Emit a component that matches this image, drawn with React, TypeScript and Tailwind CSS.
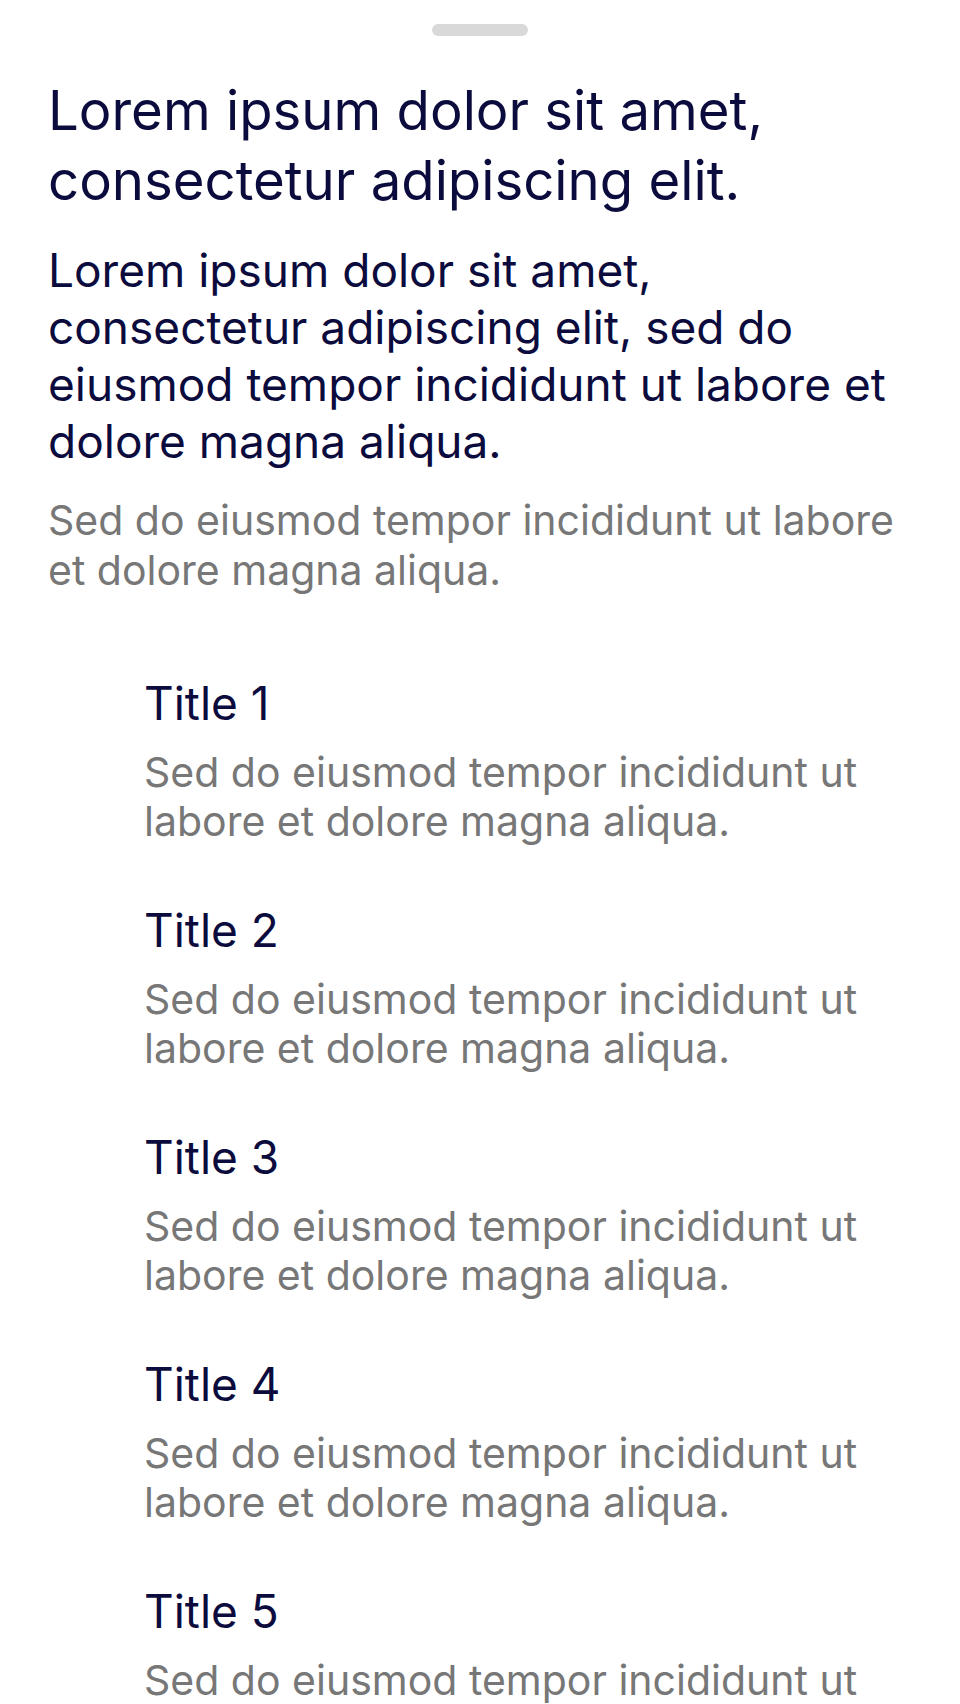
import React from "react";

const items = [1, 2, 3, 4, 5];

export default function App() {
  return (
    <div
      className="min-h-[1704px] w-[960px] overflow-hidden bg-white"
      style={{ fontFamily: "Inter, 'Noto Sans', sans-serif" }}
    >
      <div className="flex justify-center pt-[24px]">
        <div className="h-[12px] w-[96px] rounded-full bg-[#d9d9d9]" />
      </div>
      <div className="px-[48px]">
        <h1 className="mt-[39px] text-[54.5px] font-normal leading-[70px] text-[#0b0b3d]">
          Lorem ipsum dolor sit amet, consectetur adipiscing elit.
        </h1>
        <p className="mt-[27px] text-[46px] leading-[57px] text-[#0b0b3d]">
          Lorem ipsum dolor sit amet, consectetur adipiscing elit, sed do eiusmod tempor incididunt ut labore et dolore magna aliqua.
        </p>
        <p className="mt-[25px] text-[41px] leading-[50px] text-[#777777]">
          Sed do eiusmod tempor incididunt ut labore et dolore magna aliqua.
        </p>
      </div>
      <div className="mt-[83px] flex flex-col gap-[59px] pl-[144px] pr-[49px]">
        {items.map((n) => (
          <div key={n} className="flex flex-col gap-[20px]">
            <div className="text-[46px] leading-[50px] text-[#0b0b3d]">Title {n}</div>
            <div className="text-[41px] leading-[49px] text-[#777777]">
              Sed do eiusmod tempor incididunt ut labore et dolore magna aliqua.
            </div>
          </div>
        ))}
      </div>
    </div>
  );
}
